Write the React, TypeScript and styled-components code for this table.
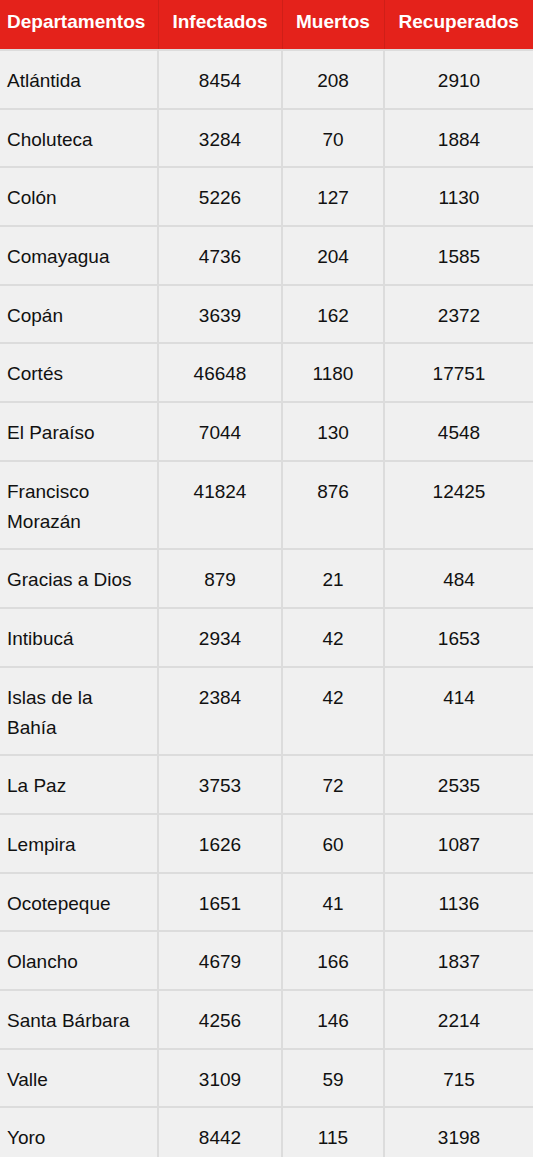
import React from "react";
import styled, {createGlobalStyle} from "styled-components";

const rows: [string, number, number, number][] = [
    ["Atlántida", 8454, 208, 2910],
    ["Choluteca", 3284, 70, 1884],
    ["Colón", 5226, 127, 1130],
    ["Comayagua", 4736, 204, 1585],
    ["Copán", 3639, 162, 2372],
    ["Cortés", 46648, 1180, 17751],
    ["El Paraíso", 7044, 130, 4548],
    ["Francisco Morazán", 41824, 876, 12425],
    ["Gracias a Dios", 879, 21, 484],
    ["Intibucá", 2934, 42, 1653],
    ["Islas de la Bahía", 2384, 42, 414],
    ["La Paz", 3753, 72, 2535],
    ["Lempira", 1626, 60, 1087],
    ["Ocotepeque", 1651, 41, 1136],
    ["Olancho", 4679, 166, 1837],
    ["Santa Bárbara", 4256, 146, 2214],
    ["Valle", 3109, 59, 715],
    ["Yoro", 8442, 115, 3198],
];

const columns = [
    {title: "Departamentos", width: 158},
    {title: "Infectados", width: 124},
    {title: "Muertos", width: 102},
    {title: "Recuperados", width: 149},
];

const App = () => {
    return (
        <>
            <GlobalStyle/>
            <Table>
                <colgroup>
                    {columns.map(c => <col key={c.title} style={{width: c.width}}/>)}
                </colgroup>
                <thead>
                <tr>
                    {columns.map(c => <Head key={c.title}>{c.title}</Head>)}
                </tr>
                </thead>
                <tbody>
                {rows.map(([name, inf, dead, rec]) => (
                    <tr key={name}>
                        <Cell>{name}</Cell>
                        <Cell $center>{inf}</Cell>
                        <Cell $center>{dead}</Cell>
                        <Cell $center>{rec}</Cell>
                    </tr>
                ))}
                </tbody>
            </Table>
        </>
    )
}

export default App

const GlobalStyle = createGlobalStyle`
  html, body {
    margin: 0;
    padding: 0;
    background: #ffffff;
    font-family: "Liberation Sans", Arial, sans-serif;
  }
`

const Table = styled.table`
  width: 533px;
  border-collapse: collapse;
  table-layout: fixed;
`

const Head = styled.th`
  background: #e4221b;
  color: #ffffff;
  font-size: 19px;
  font-weight: 700;
  line-height: 30px;
  padding: 7px 7px 12px;
  text-align: center;
  white-space: nowrap;
  border-left: 1px solid #cf1f18;
  border-right: 1px solid #cf1f18;

  &:first-child {
    border-left: none;
    text-align: left;
  }

  &:last-child {
    border-right: none;
  }
`

const Cell = styled.td<{ $center?: boolean }>`
  background: #f0f0f0;
  color: #111111;
  font-size: 19px;
  line-height: 30px;
  padding: 15px 7px 11.67px;
  vertical-align: top;
  text-align: ${({$center}) => ($center ? 'center' : 'left')};
  border: 2px solid #dcdcdc;

  &:first-child {
    border-left: none;
    padding-right: 14px;
  }

  &:last-child {
    border-right: none;
  }
`
